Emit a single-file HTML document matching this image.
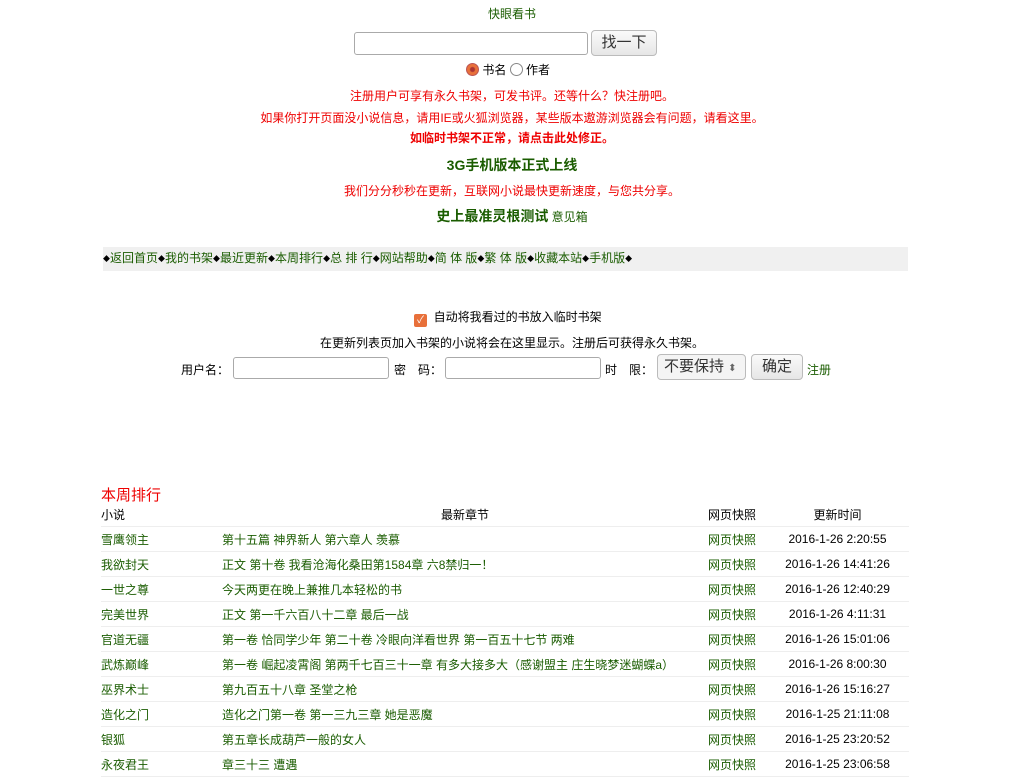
<!DOCTYPE html>
<html><head><meta charset="utf-8"><style>
body{margin:0;width:1024px;height:768px;overflow:hidden;background:#fff;font-family:"Liberation Sans","Noto Sans CJK SC",sans-serif;font-size:12px;color:#000;position:relative}
.a{position:absolute;white-space:nowrap}
.c{position:absolute;left:0;width:1024px;text-align:center;white-space:nowrap}
.g{color:#1a5c00}.r{color:#e00}
input.t{position:absolute;height:20px;border:1px solid #aaa;border-radius:3px;box-sizing:border-box;background:#fff}
.btn{position:absolute;border:1px solid #bbb;border-radius:4px;background:linear-gradient(#fafafa,#e6e6e6);font-size:15px;color:#333;text-align:center;box-sizing:border-box}
table{position:absolute;left:101px;top:502px;width:808px;border-collapse:collapse}
td{height:24px;border-bottom:1px solid #eee;padding:0;white-space:nowrap;font-size:12px}
td.n{width:121px}td.ch{width:486px}td.s{width:70px}td.tm{text-align:center;padding-right:12px}
.d{font-size:7px;vertical-align:1px;color:#000}
</style></head><body>
<div class="c g" style="top:5px">快眼看书</div>
<input class="t" style="left:354px;top:32px;width:234px;height:23px">
<div class="btn" style="left:591px;top:30px;width:66px;height:26px;line-height:24px">找一下</div>
<div class="a" style="left:466px;top:61px"><span style="display:inline-block;width:13px;height:13px;border-radius:50%;border:1px solid #b55;vertical-align:-2px;box-sizing:border-box;background:radial-gradient(circle,#a33 0 2px,#e8703a 3px)"></span> 书名 <span style="display:inline-block;width:13px;height:13px;border-radius:50%;border:1px solid #888;vertical-align:-2px;box-sizing:border-box"></span> 作者</div>
<div class="c r" style="top:87px">注册用户可享有永久书架，可发书评。还等什么？快注册吧。</div>
<div class="c r" style="top:109px">如果你打开页面没小说信息，请用IE或火狐浏览器，某些版本遨游浏览器会有问题，请看这里。</div>
<div class="c r" style="top:129px;font-weight:bold">如临时书架不正常，请点击此处修正。</div>
<div class="c g" style="top:155px;font-size:14px;font-weight:bold">3G手机版本正式上线</div>
<div class="c r" style="top:182px">我们分分秒秒在更新，互联网小说最快更新速度，与您共分享。</div>
<div class="c g" style="top:206px"><b style="font-size:14px">史上最准灵根测试</b> 意见箱</div>
<div class="a g" style="left:103px;top:247px;width:805px;height:24px;background:#f0f0f0;line-height:23px"><span class="d">◆</span>返回首页<span class="d">◆</span>我的书架<span class="d">◆</span>最近更新<span class="d">◆</span>本周排行<span class="d">◆</span>总 排 行<span class="d">◆</span>网站帮助<span class="d">◆</span>简 体 版<span class="d">◆</span>繁 体 版<span class="d">◆</span>收藏本站<span class="d">◆</span>手机版<span class="d">◆</span></div>
<div class="a" style="left:414px;top:308px"><span style="display:inline-block;width:13px;height:13px;background:#e8703a;border-radius:2px;vertical-align:-2px;color:#fff;font-size:10px;line-height:13px;text-align:center">✓</span>&nbsp; 自动将我看过的书放入临时书架</div>
<div class="c" style="top:334px">在更新列表页加入书架的小说将会在这里显示。注册后可获得永久书架。</div>
<div class="a" style="left:181px;top:361px">用户名：</div>
<input class="t" style="left:233px;top:357px;width:156px;height:22px">
<div class="a" style="left:394px;top:361px">密　码：</div>
<input class="t" style="left:445px;top:357px;width:156px;height:22px">
<div class="a" style="left:605px;top:361px">时　限：</div>
<div class="btn" style="left:657px;top:354px;width:89px;height:26px;line-height:24px;text-align:left;padding-left:6px;background:#f4f4f4">不要保持 <span style="font-size:10px;color:#666">⬍</span></div>
<div class="btn" style="left:751px;top:354px;width:52px;height:26px;line-height:24px">确定</div>
<div class="a g" style="left:807px;top:361px">注册</div>
<div class="a r" style="left:101px;top:484px;font-size:15px">本周排行</div>
<table>
<tr><td class="n">小说</td><td class="ch" style="text-align:center">最新章节</td><td class="s">网页快照</td><td class="tm">更新时间</td></tr>
<tr class="g"><td>雪鹰领主</td><td>第十五篇 神界新人 第六章人 羡慕</td><td>网页快照</td><td class="tm" style="color:#000">2016-1-26 2:20:55</td></tr>
<tr class="g"><td>我欲封天</td><td>正文 第十卷 我看沧海化桑田第1584章 六8禁归一！</td><td>网页快照</td><td class="tm" style="color:#000">2016-1-26 14:41:26</td></tr>
<tr class="g"><td>一世之尊</td><td>今天两更在晚上兼推几本轻松的书</td><td>网页快照</td><td class="tm" style="color:#000">2016-1-26 12:40:29</td></tr>
<tr class="g"><td>完美世界</td><td>正文 第一千六百八十二章 最后一战</td><td>网页快照</td><td class="tm" style="color:#000">2016-1-26 4:11:31</td></tr>
<tr class="g"><td>官道无疆</td><td>第一卷 恰同学少年 第二十卷 冷眼向洋看世界 第一百五十七节 两难</td><td>网页快照</td><td class="tm" style="color:#000">2016-1-26 15:01:06</td></tr>
<tr class="g"><td>武炼巅峰</td><td>第一卷 崛起凌霄阁 第两千七百三十一章 有多大接多大（感谢盟主 庄生晓梦迷蝴蝶a）</td><td>网页快照</td><td class="tm" style="color:#000">2016-1-26 8:00:30</td></tr>
<tr class="g"><td>巫界术士</td><td>第九百五十八章 圣堂之枪</td><td>网页快照</td><td class="tm" style="color:#000">2016-1-26 15:16:27</td></tr>
<tr class="g"><td>造化之门</td><td>造化之门第一卷 第一三九三章 她是恶魔</td><td>网页快照</td><td class="tm" style="color:#000">2016-1-25 21:11:08</td></tr>
<tr class="g"><td>银狐</td><td>第五章长成葫芦一般的女人</td><td>网页快照</td><td class="tm" style="color:#000">2016-1-25 23:20:52</td></tr>
<tr class="g"><td>永夜君王</td><td>章三十三 遭遇</td><td>网页快照</td><td class="tm" style="color:#000">2016-1-25 23:06:58</td></tr>
</table>
</body></html>
